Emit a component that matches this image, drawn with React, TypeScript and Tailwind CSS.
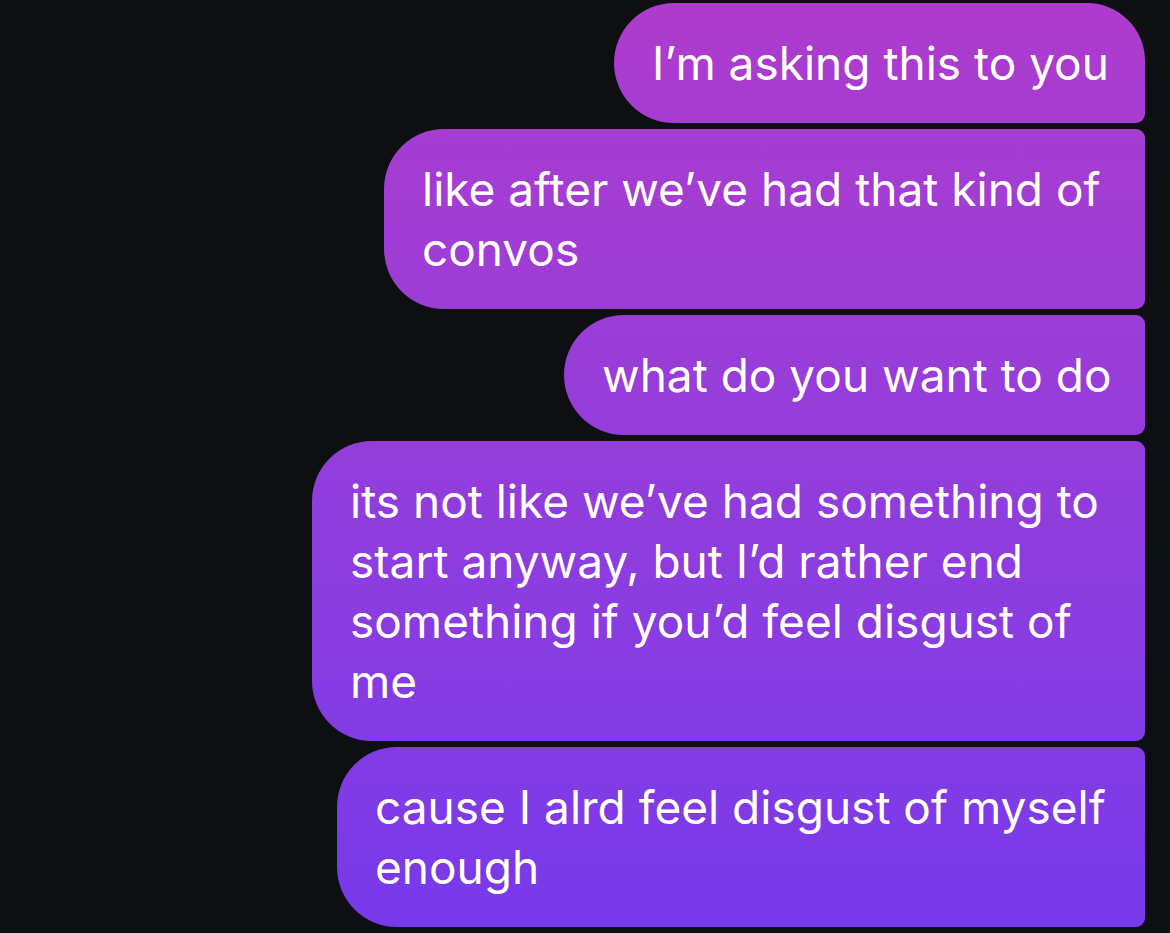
const messages: { lines: string[]; width: string; corners: string }[] = [
  {
    lines: ["I’m asking this to you"],
    width: "w-[531px]",
    corners: "rounded-l-[60px] rounded-tr-[58px] rounded-br-[9px]",
  },
  {
    lines: ["like after we’ve had that kind of", "convos"],
    width: "w-[761px]",
    corners: "rounded-l-[60px] rounded-r-[9px]",
  },
  {
    lines: ["what do you want to do"],
    width: "w-[581px]",
    corners: "rounded-l-[60px] rounded-r-[9px]",
  },
  {
    lines: [
      "its not like we’ve had something to",
      "start anyway, but I’d rather end",
      "something if you’d feel disgust of",
      "me",
    ],
    width: "w-[833px]",
    corners: "rounded-l-[60px] rounded-r-[9px]",
  },
  {
    lines: ["cause I alrd feel disgust of myself", "enough"],
    width: "w-[808px]",
    corners: "rounded-l-[60px] rounded-r-[9px]",
  },
];

function Bubble({ lines, width, corners }: { lines: string[]; width: string; corners: string }) {
  return (
    <div
      className={`${width} ${corners} bg-gradient-to-b from-[#ae3bcd] to-[#7739ea] bg-fixed py-[30px] pl-[38px] text-[46px] leading-[60px] text-white`}
    >
      {lines.map((line, i) => (
        <div key={i} className="whitespace-nowrap">
          {line}
        </div>
      ))}
    </div>
  );
}

export default function App() {
  return (
    <main
      className="flex min-h-screen flex-col items-end gap-[6px] bg-[#0d0f13] pt-[3px] pr-[25px]"
      style={{ fontFamily: "Inter, Roboto, sans-serif" }}
    >
      {messages.map((m, i) => (
        <Bubble key={i} {...m} />
      ))}
    </main>
  );
}
